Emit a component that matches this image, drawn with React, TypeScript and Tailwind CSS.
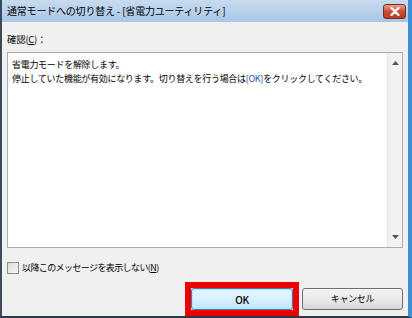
import React from "react";

const jp = { fontFamily: '"Noto Sans CJK JP", "Noto Sans", sans-serif' };

export default function App() {
  return (
    <div className="w-[412px] h-[318px] overflow-hidden bg-[#5b7aa0]" style={jp}>
      <div className="flex flex-col w-[412px] h-[318px] border-l-[2px] border-r-[4px] border-b-[2px] border-l-[#3d4a5c] border-r-[#3a8fd6] border-b-[#2d3a4a]">
        {/* title bar */}
        <div className="h-[22px] flex items-center justify-between pl-[5px] pr-[2px] bg-gradient-to-b from-[#c8dbef] to-[#a9c6e6] text-[10px] tracking-[-0.2px] text-black">
          <span className="leading-none">通常モードへの切り替え - [省電力ユーティリティ]</span>
          <div className="w-[23px] h-[15px] rounded-[3px] border border-[#7a2a20] bg-gradient-to-b from-[#e9a093] via-[#cf4a33] to-[#b63b26] flex items-center justify-center">
            <svg width="10" height="9" viewBox="0 0 10 9">
              <path d="M1.5 1 L8.5 8 M8.5 1 L1.5 8" stroke="#ffffff" strokeWidth="2.2" strokeLinecap="round" />
            </svg>
          </div>
        </div>
        {/* body */}
        <div className="flex-1 flex flex-col bg-[#f0f0f0] px-[5px] text-[9px] tracking-[-0.3px] text-black">
          <div className="h-[30px] flex items-center pt-[4px] text-[9.5px]">
            確認(<span className="underline">C</span>)：
          </div>
          <div className="h-[196px] flex bg-white border border-[#abadb3]">
            <div className="flex-1 pl-[4px] pt-[5px] leading-[14px] whitespace-nowrap">
              <p>省電力モードを解除します。</p>
              <p>
                停止していた機能が有効になります。切り替えを行う場合は<span className="text-[#1a4fa0]">[OK]</span>をクリックしてください。
              </p>
            </div>
            <div className="w-[15px] flex flex-col justify-between items-center py-[8px] bg-[#f2f2f2] border-l border-dotted border-[#d8d8d8]">
              <svg width="7" height="4" viewBox="0 0 7 4"><path d="M0 4 L3.5 0 L7 4 Z" fill="#555" /></svg>
              <svg width="7" height="4" viewBox="0 0 7 4"><path d="M0 0 L3.5 4 L7 0 Z" fill="#555" /></svg>
            </div>
          </div>
          <div className="h-[34px] flex items-center gap-[3px] pt-[6px]">
            <div className="w-[12px] h-[12px] border border-[#8f8f8f] bg-gradient-to-br from-[#dcdcdc] to-[#f7f7f7]" />
            <span className="tracking-[-0.6px]">
              以降このメッセージを表示しない(<span className="underline">N</span>)
            </span>
          </div>
          <div className="flex justify-end items-center gap-[3px]">
            <div className="border-[6px] border-[#ee0000]">
              <button className="w-[102px] h-[22px] rounded-[3px] border border-[#3c7fb1] bg-gradient-to-b from-[#eaf6fd] via-[#d9f0fc] to-[#bee6fd] text-[10px] font-medium shadow-[inset_0_0_0_1px_#b8e3f8]">
                OK
              </button>
            </div>
            <button className="w-[101px] h-[22px] rounded-[3px] border border-[#707070] bg-gradient-to-b from-[#f2f2f2] via-[#ebebeb] to-[#d6d6d6] text-[9px] tracking-[-0.3px]">
              キャンセル
            </button>
          </div>
        </div>
      </div>
    </div>
  );
}
